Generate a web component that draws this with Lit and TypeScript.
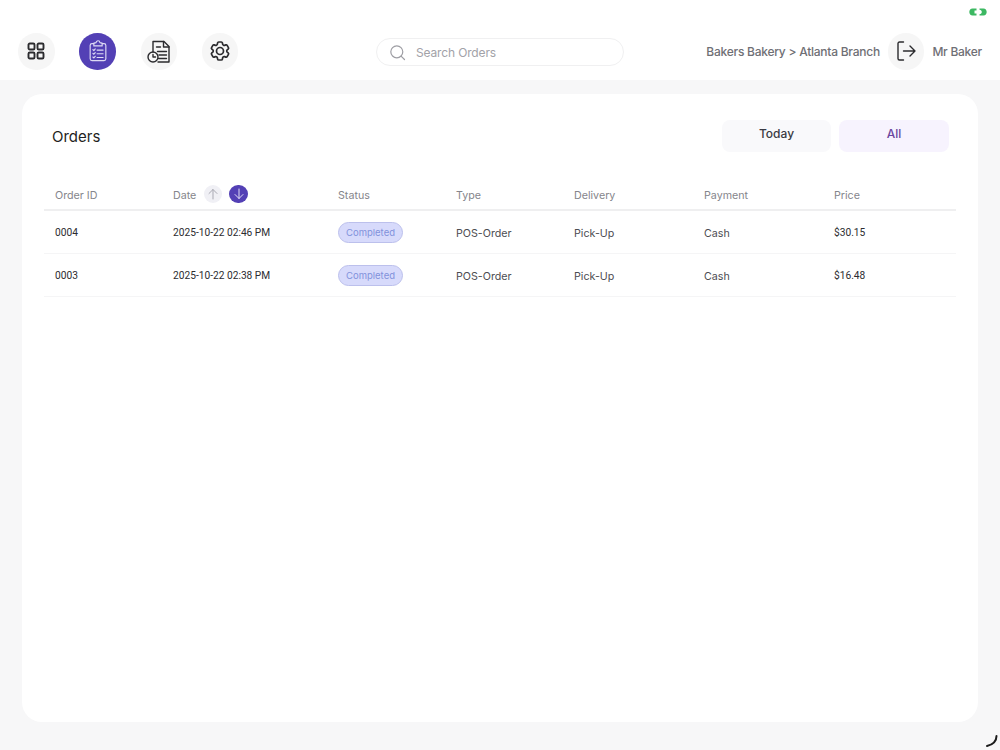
import { LitElement, html, css, svg } from "lit";
import { customElement } from "lit/decorators.js";

const rows = [
  { id: "0004", date: "2025-10-22 02:46 PM", price: "$30.15" },
  { id: "0003", date: "2025-10-22 02:38 PM", price: "$16.48" },
];

const grid = svg`<g fill="none" stroke="#2b2b2e" stroke-width="1.9"><rect x="4.500" y="4.500" width="6" height="6" rx="1.300"/><rect x="13.500" y="4.500" width="6" height="6" rx="1.300"/><rect x="4.500" y="13.500" width="6" height="6" rx="1.300"/><rect x="13.500" y="13.500" width="6" height="6" rx="1.300"/></g>`;
const clip = svg`<g fill="none" stroke="#dedaf4" stroke-width="1.250" stroke-linecap="round" stroke-linejoin="round"><path d="M8.500 5H6.500a2 2 0 0 0-2 2v14.500a2 2 0 0 0 2 2h13a2 2 0 0 0 2-2V7a2 2 0 0 0-2-2h-2"/><path d="M8.500 7.500V4.500l2.500-.6a2 2 0 0 1 4 0l2.500.6v3z"/><path d="M7.500 11.500l1 1 1.500-1.800M7.500 15.500l1 1 1.500-1.800M7.500 19.500l1 1 1.500-1.800M12 12h6.500M12 16h6.500M12 20h6.500"/></g>`;
const doc = svg`<g fill="none" stroke="#2b2b2e" stroke-width="1.400" stroke-linecap="round" stroke-linejoin="round"><path d="M6 13V2.500h11l5 5V23H11"/><path d="M16.500 2.500V8h5.500"/><path d="M9.500 8h4M10.500 12.500h9M12 16h7.500M11.500 19.500h8"/><circle cx="6" cy="18" r="5"/><path d="M6 15.500V18h2.500"/></g>`;
const gear = svg`<g fill="none" stroke="#2b2b2e" stroke-width="1.700" stroke-linecap="round" stroke-linejoin="round"><path d="M9.594 3.940c.09-.542.56-.94 1.110-.94h2.593c.55 0 1.020.398 1.110.94l.213 1.281c.063.374.313.686.645.870.074.04.147.083.22.127.325.196.72.257 1.075.124l1.217-.456a1.125 1.125 0 0 1 1.370.49l1.296 2.247a1.125 1.125 0 0 1-.26 1.431l-1.003.827c-.293.241-.438.613-.43.992a7.723 7.723 0 0 1 0 .255c-.008.378.137.75.43.991l1.004.827c.424.35.534.955.26 1.430l-1.298 2.247a1.125 1.125 0 0 1-1.369.491l-1.217-.456c-.355-.133-.75-.072-1.076.124a6.470 6.470 0 0 1-.22.128c-.331.183-.581.495-.644.869l-.213 1.281c-.09.543-.56.94-1.110.94h-2.594c-.55 0-1.019-.398-1.110-.94l-.213-1.281c-.062-.374-.312-.686-.644-.87a6.520 6.520 0 0 1-.22-.127c-.325-.196-.72-.257-1.076-.124l-1.217.456a1.125 1.125 0 0 1-1.369-.49l-1.297-2.247a1.125 1.125 0 0 1 .26-1.431l1.004-.827c.292-.24.437-.613.43-.991a6.932 6.932 0 0 1 0-.255c.007-.38-.138-.751-.43-.992l-1.004-.827a1.125 1.125 0 0 1-.26-1.430l1.297-2.247a1.125 1.125 0 0 1 1.370-.491l1.216.456c.356.133.751.072 1.076-.124.072-.044.146-.086.22-.128.332-.183.582-.495.644-.869l.214-1.280Z"/><circle cx="12" cy="12" r="3.500"/></g>`;

@customElement("app-root")
export class AppRoot extends LitElement {
  static styles = css`
    :host {
      display: block;
      position: relative;
      width: 1000px;
      height: 750px;
      overflow: hidden;
      background: #f7f7f8;
      font-family: "Inter", "Liberation Sans", sans-serif;
      color: #2c2c30;
    }
    header {
      height: 80px;
      box-sizing: border-box;
      padding: 33px 18px 0;
      background: #fff;
      display: grid;
      grid-template-columns: 1fr 248px 1fr;
      align-items: start;
    }
    .nav { display: flex; gap: 24.800px; }
    .ico {
      width: 36.500px; height: 36.500px; border-radius: 50%;
      background: #f6f6f6;
      display: flex; align-items: center; justify-content: center;
      flex: none;
    }
    .ico.on { background: #5340b5; }
    .ico svg { width: 24px; height: 24px; display: block; }
    .search {
      margin-top: 5px;
      height: 28px;
      box-sizing: border-box;
      border: 1px solid #f0f0f1;
      border-radius: 14px;
      display: flex; align-items: center;
      padding-left: 12px; gap: 10px;
      font-size: 12px; color: #a2a2a8; letter-spacing: -.15px;
    }
    .search svg { width: 17px; height: 17px; }
    .right {
      display: flex; align-items: center; justify-content: flex-end;
      font-size: 12px; font-weight: 500; color: #6f6f75; letter-spacing: -.25px;
    }
    .branch { margin-right: 8px; white-space: nowrap; }
    .user { margin-left: 8px; white-space: nowrap; }
    .card {
      margin: 14px 22px 0;
      height: 628px;
      box-sizing: border-box;
      background: #fff;
      border-radius: 20px;
      padding: 26px 22px 0;
    }
    .top {
      display: flex; align-items: center; justify-content: space-between;
      padding: 0 7px 0 8px; height: 32px;
    }
    h1 { margin: 0; font-size: 15px; font-weight: 400; color: #1f1f23; }
    .tabs { display: flex; gap: 8px; }
    .tab {
      width: 109px; height: 32px; border-radius: 8px;
      background: #f9f9fb; color: #3a3a42;
      font-size: 12px; font-weight: 500;
      display: flex; align-items: center; justify-content: center;
      padding-bottom: 5px; box-sizing: border-box;
    }
    .tab.on { width: 110px; background: #f7f3fe; color: #6a479f; }
    .row {
      display: grid;
      grid-template-columns: 118px 165px 118px 118px 130px 130px 1fr;
      padding-left: 11px;
      align-items: center;
    }
    .row.head {
      margin-top: 26px;
      height: 33px;
      border-bottom: 2px solid #efeff0;
      box-sizing: border-box;
      font-size: 10.700px; color: #85858b;
      padding-top: 3px;
    }
    .row.body {
      height: 43px; box-sizing: border-box;
      border-bottom: 1px solid #f5f5f6;
      font-size: 10.700px; color: #3a3a3e;
    }
    .row.body .soft { color: #4d4d52; padding-top: 2px; }
    .row.body .num {
      font-family: "Roboto", "Liberation Sans", sans-serif;
      font-size: 10.200px; color: #2c2c30;
    }
    .date-h { display: flex; align-items: center; }
    .sort {
      width: 18.500px; height: 18.500px; border-radius: 50%;
      display: flex; align-items: center; justify-content: center;
      background: #f0f0f5; margin-left: 7.500px; margin-top: -2px;
    }
    .sort + .sort { margin-left: 7px; background: #5340b5; }
    .sort svg { width: 14px; height: 14px; }
    .cell { padding-top: 1px; display: block; }
    .pill {
      width: 65px; height: 21px; box-sizing: border-box;
      border: 1px solid #bcc0ec; border-radius: 11px;
      background: #d7dafb; color: #8292dc;
      font-size: 9.500px;
      display: flex; align-items: center; justify-content: center;
    }
    .signal { position: absolute; left: 969px; top: 8px; width: 18px; height: 8px; }
    .spin { position: absolute; left: 984px; top: 734px; width: 14px; height: 14px; }
  `;

  render() {
    return html`
      <svg class="signal" viewBox="0 0 18 8" fill="#3cb862">
        <path d="M7.500 0.500H3.500C1.500.5.300 2.200.3 4s1.200 3.500 3.200 3.500h4V5.500H5.500V2.500h2z"/>
        <path d="M10.500 0.500h4c2 0 3.200 1.700 3.200 3.500s-1.200 3.500-3.200 3.500h-4V6.200c1.500-.2 2.300-1 2.300-2.200s-.8-2-2.300-2.200z"/>
      </svg>
      <header>
        <div class="nav">
          <div class="ico"><svg viewBox="0 0 24 24">${grid}</svg></div>
          <div class="ico on"><svg viewBox="0 0 26 26">${clip}</svg></div>
          <div class="ico"><svg viewBox="0 0 24 24">${doc}</svg></div>
          <div class="ico"><svg viewBox="0 0 24 24">${gear}</svg></div>
        </div>
        <div class="search">
          <svg viewBox="0 0 17 17" fill="none" stroke="#9e9ea4" stroke-width="1.200" stroke-linecap="round"><circle cx="7.800" cy="7.800" r="6"/><path d="M12.300 12.300l3.200 3.200"/></svg>
          <span>Search Orders</span>
        </div>
        <div class="right">
          <span class="branch">Bakers Bakery &gt; Atlanta Branch</span>
          <div class="ico">
            <svg viewBox="0 0 24 24" fill="none" stroke="#2b2b2e" stroke-width="1.400" stroke-linecap="round" stroke-linejoin="round"><path d="M9.500 3H5.500a1.500 1.500 0 0 0-1.500 1.500v15A1.500 1.500 0 0 0 5.500 21h4"/><path d="M9.500 12H21M16 7l5 5-5 5"/></svg>
          </div>
          <span class="user">Mr Baker</span>
        </div>
      </header>
      <main class="card">
        <div class="top">
          <h1>Orders</h1>
          <div class="tabs">
            <div class="tab">Today</div>
            <div class="tab on">All</div>
          </div>
        </div>
        <div class="row head">
          <span>Order ID</span>
          <span class="date-h">Date
            <span class="sort"><svg viewBox="0 0 14 14" fill="none" stroke="#a9a9b3" stroke-width="1" stroke-linecap="round" stroke-linejoin="round"><path d="M7 12V2.500M3 6.500l4-4 4 4"/></svg></span>
            <span class="sort"><svg viewBox="0 0 14 14" fill="none" stroke="#e0dcf5" stroke-width="1" stroke-linecap="round" stroke-linejoin="round"><path d="M7 2v9.500M3 7.500l4 4 4-4"/></svg></span>
          </span>
          <span>Status</span>
          <span>Type</span>
          <span>Delivery</span>
          <span>Payment</span>
          <span>Price</span>
        </div>
        ${rows.map(
          (r) => html`<div class="row body">
            <span class="num">${r.id}</span>
            <span class="num">${r.date}</span>
            <span class="cell"><span class="pill">Completed</span></span>
            <span class="soft">POS-Order</span>
            <span class="soft">Pick-Up</span>
            <span class="soft">Cash</span>
            <span class="num">${r.price}</span>
          </div>`
        )}
      </main>
      <svg class="spin" viewBox="0 0 14 14" fill="none" stroke="#1c1c1c" stroke-width="2" stroke-linecap="round"><path d="M12.500 2c0 5-3.500 8.500-9.500 10"/></svg>
    `;
  }
}
